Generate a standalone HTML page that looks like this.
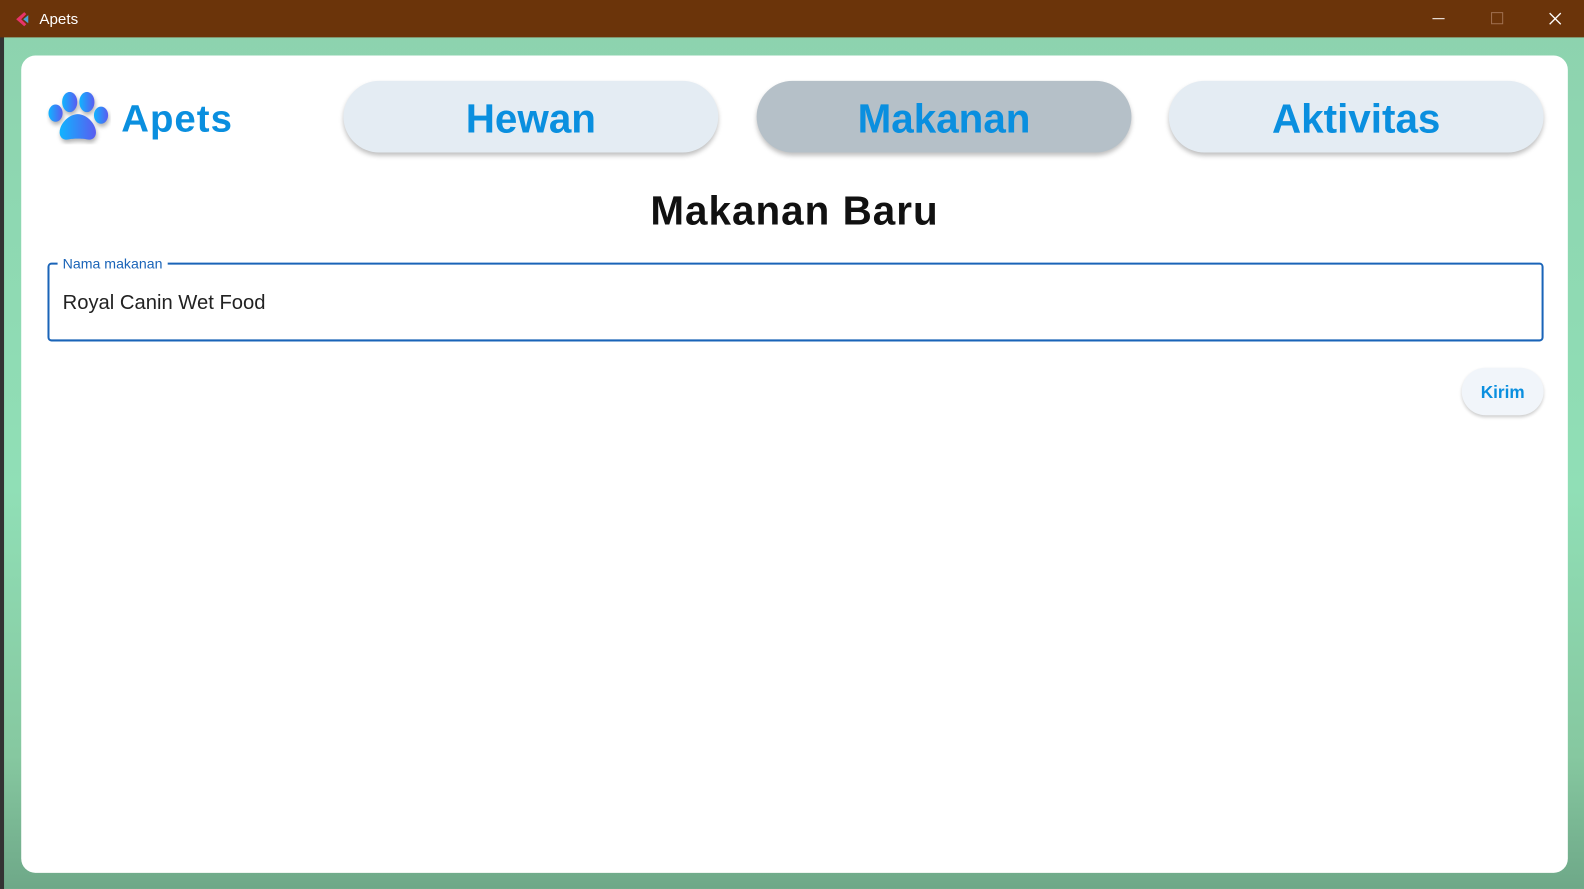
<!DOCTYPE html>
<html><head><style>
html,body{margin:0;padding:0;width:1584px;height:889px;overflow:hidden;font-family:"Liberation Sans",sans-serif}
#w{width:1568px;height:880px;transform:scale(1.0102);transform-origin:0 0;position:relative;background:linear-gradient(180deg,#8dd2ae 0%,#90dfb6 55%,#86c8a0 85%,#6ea888 100%)}
#tb{position:absolute;left:0;top:0;width:1568px;height:37px;background:#6b340a;color:#fff;font-size:15px}
#card{position:absolute;left:21px;top:55px;width:1531px;height:809px;background:#fff;border-radius:14px}
.nav{position:absolute;top:25px;height:71px;width:371px;border-radius:36px;background:#e4ecf3;box-shadow:0 3px 5px rgba(0,0,0,.25);color:#0a8fdf;font-size:40px;font-weight:bold;text-align:center;line-height:77px}
</style></head><body><div id="w">
<div style="position:absolute;left:0;top:0;width:4px;height:880px;background:#333"></div>
<div id="tb">
<svg style="position:absolute;left:14px;top:11px" width="16" height="16" viewBox="0 0 16 16"><path d="M10 1L2 8l8 7 2-2-5-5 5-5z" fill="#e8336a"/><path d="M14 4L9 8l5 4z" fill="#4aa3d8"/></svg>
<span style="position:absolute;left:39px;top:11px">Apets</span>
<div style="position:absolute;left:1418px;top:18px;width:12px;height:1px;background:#fff"></div>
<div style="position:absolute;left:1476px;top:12px;width:10px;height:10px;border:1px solid #a07050"></div>
<svg style="position:absolute;left:1533px;top:12px" width="13" height="13"><path d="M1 1L12 12M12 1L1 12" stroke="#fff" stroke-width="1.3"/></svg>
</div>
<div id="card">
<svg style="position:absolute;left:25px;top:36px" width="64" height="52" viewBox="0 0 64 52">
<defs><linearGradient id="g" x1="0" x2="1"><stop offset="0" stop-color="#10b4ff"/><stop offset="1" stop-color="#5a5cf0"/></linearGradient></defs>
<g fill="url(#g)" style="filter:drop-shadow(1px 3px 2px rgba(0,0,0,.3))">
<ellipse cx="9" cy="21" rx="7" ry="8.5"/><ellipse cx="23" cy="10" rx="7.5" ry="10"/><ellipse cx="40" cy="10" rx="7.5" ry="10"/><ellipse cx="54" cy="23" rx="7" ry="8.5"/>
<path d="M31 22c-9 0-18 10-18 18 0 6 5 8 9 7 4-1 14-1 18 0 4 1 9-1 9-7 0-8-9-18-18-18z"/></g></svg>
<div style="position:absolute;left:99px;top:42px;font-size:38px;color:#0a8fdf;font-weight:bold;letter-spacing:1px">Apets</div>
<div class="nav" style="left:319px">Hewan</div>
<div class="nav" style="left:728px;background:#b5c0c8">Makanan</div>
<div class="nav" style="left:1136px">Aktivitas</div>
<div style="position:absolute;left:0;width:1531px;top:132px;text-align:center;font-size:40px;font-weight:bold;color:#111;letter-spacing:1px">Makanan Baru</div>
<div style="position:absolute;left:26px;top:205px;width:1477px;height:74px;border:2px solid #1a64b8;border-radius:4px"></div>
<div style="position:absolute;left:36px;top:198px;background:#fff;padding:0 5px;font-size:14px;color:#1a64b8">Nama makanan</div>
<div style="position:absolute;left:41px;top:234px;font-size:20px;color:#222">Royal Canin Wet Food</div>
<div style="position:absolute;left:1426px;top:309px;width:81px;height:47px;border-radius:24px;background:#f1f5fa;box-shadow:0 2px 3px rgba(0,0,0,.2);color:#0a8fdf;font-size:17px;font-weight:bold;text-align:center;line-height:49px">Kirim</div>
</div>
</div></body></html>
